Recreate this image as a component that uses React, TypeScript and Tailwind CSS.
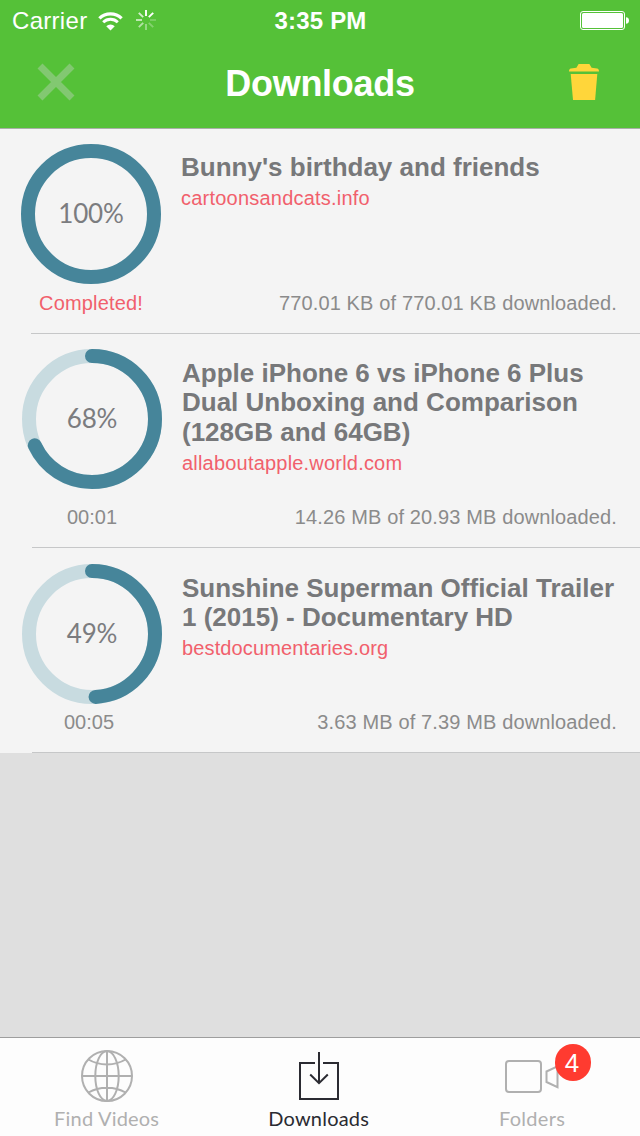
import type { ReactNode } from "react";

const RADIUS = 63;
const CIRCUMFERENCE = 2 * Math.PI * RADIUS;

function ProgressRing({ percent }: { percent: number }) {
  const complete = percent === 100;
  return (
    <div className="grid h-[140px] w-[140px] shrink-0 place-items-center">
      <svg className="col-start-1 row-start-1" width="140" height="140" viewBox="0 0 140 140" fill="none" strokeWidth="14">
        <circle cx="70" cy="70" r={RADIUS} stroke={complete ? "#46859a" : "#c8dbe0"} />
        {!complete && (
          <circle
            cx="70"
            cy="70"
            r={RADIUS}
            stroke="#46859a"
            strokeLinecap="round"
            strokeDasharray={`${(CIRCUMFERENCE * percent) / 100} ${CIRCUMFERENCE}`}
            transform="rotate(-90 70 70)"
          />
        )}
      </svg>
      <span className="col-start-1 row-start-1 pb-0.5 font-['Lato',sans-serif] text-[26px] leading-[32px] tracking-[-0.2px] text-[#7b7c7f]">
        {percent}%
      </span>
    </div>
  );
}

type DownloadProps = {
  title: ReactNode;
  site: string;
  percent: number;
  status: string;
  amount: string;
  frame: string;
  ringSpace: string;
  titleSpace: string;
  siteStyle: string;
  statusStyle: string;
  lineSpace: string;
};

function DownloadRow({ title, site, percent, status, amount, frame, ringSpace, titleSpace, siteStyle, statusStyle, lineSpace }: DownloadProps) {
  return (
    <li className={`flex flex-col bg-[#f4f4f4] ${frame}`}>
      <div className="flex min-h-0 flex-1 pr-[23px] pb-[18px]">
        <div className={`flex w-[140px] shrink-0 flex-col items-center justify-between ${ringSpace}`}>
          <ProgressRing percent={percent} />
          <span className={`shrink-0 text-[20px] leading-[24px] ${statusStyle}`}>{status}</span>
        </div>
        <div className={`flex flex-1 flex-col pl-5 ${titleSpace}`}>
          <h2 className="text-[26px] leading-[29.4px] font-bold whitespace-nowrap text-[#77787a]">{title}</h2>
          <p className={`text-[20px] leading-[24px] text-[#f1606c] ${siteStyle}`}>{site}</p>
          <p className="mt-auto text-right text-[20px] leading-[24px] tracking-[0.13px] whitespace-nowrap text-[#8b8b8b]">
            {amount}
          </p>
        </div>
      </div>
      <div className={`h-px shrink-0 bg-[#c6c7c8] ${lineSpace}`} />
    </li>
  );
}

function StatusBar() {
  return (
    <div className="grid h-10 grid-cols-3 items-center pt-px pr-[11px] pl-3 text-[24px] leading-[40px] text-white">
      <div className="flex items-center">
        <span className="tracking-[0.3px]">Carrier</span>
        <svg className="ml-[11px]" width="25" height="19" viewBox="0 0 26 20" fill="none" stroke="white">
          <path d="M1.3 6.7a16.6 16.6 0 0 1 23.4 0" strokeWidth="3.4" />
          <path d="M5.3 10.8a10.9 10.9 0 0 1 15.4 0" strokeWidth="3" />
          <path d="M8.5 14.9a6.4 6.4 0 0 1 9 0L13 19.5z" fill="white" stroke="none" />
        </svg>
        <svg className="mb-0.5 ml-[13px]" width="20" height="20" viewBox="0 0 20 20" stroke="white" strokeWidth="1.9">
          <path d="M10 0v6" />
          <path d="m17.2 2.8-4.4 4.4" />
          <path d="M20 10h-6" opacity=".22" />
          <path d="m17.2 17.2-4.4-4.4" opacity=".28" />
          <path d="M10 20v-6" opacity=".4" />
          <path d="m2.8 17.2 4.4-4.4" opacity=".55" />
          <path d="M0 10h6" opacity=".65" />
          <path d="m2.8 2.8 4.4 4.4" opacity=".75" />
        </svg>
      </div>
      <span className="text-center font-bold tracking-[0.2px]">3:35 PM</span>
      <svg className="justify-self-end" width="49" height="20" viewBox="0 0 49 20" fill="none">
        <rect x=".5" y=".5" width="44" height="18" rx="2.5" stroke="white" />
        <rect x="2" y="2" width="41" height="15" rx="1.5" fill="white" />
        <path d="M46 6.2c1.7 0 3 1.1 3 3.3s-1.3 3.3-3 3.3z" fill="white" />
      </svg>
    </div>
  );
}

function Header() {
  return (
    <header className="h-[129px] shrink-0 border-b border-[#a9b0a7] bg-[#55c138]">
      <StatusBar />
      <div className="flex h-[88px] items-center justify-between pr-[41px] pl-[37px]">
        <button type="button" aria-label="Cancel" className="-mt-1">
          <svg width="38" height="38" viewBox="0 0 38 38" stroke="#82c871" strokeWidth="7" strokeLinejoin="round">
            <path d="m3 3 32 32M35 3 3 35" />
          </svg>
        </button>
        <h1 className="pr-1 text-[36px] leading-[88px] font-bold tracking-[-0.3px] text-white">Downloads</h1>
        <button type="button" aria-label="Delete" className="-mt-1">
          <svg width="30" height="36" viewBox="0 0 30 36" fill="#ffd63a">
            <path d="M9.6 0h10.8l2.2 3.8 5.5.7c1.3.3 1.9 1.3 1.9 2.9H0c0-1.6.6-2.6 1.9-2.9l5.5-.7z" />
            <path d="M1.7 10h26.6l-2.2 26H4z" />
          </svg>
        </button>
      </div>
    </header>
  );
}

function TabBar() {
  return (
    <nav className="grid h-[99px] shrink-0 grid-cols-3 border-t border-[#9e9e9e] bg-[#fdfdfd] font-['Lato',sans-serif] text-[20px] leading-[24px]">
      <a className="flex flex-col items-center pt-3 text-[#b0b0b0]">
        <svg width="52" height="52" viewBox="0 0 52 52" fill="none" stroke="#b0b0b0" strokeWidth="2">
          <circle cx="26" cy="26" r="25" />
          <ellipse cx="26" cy="26" rx="11.7" ry="25" />
          <path d="M26 1v50M1 26h50M7.5 9.5c10.5 6.5 26.5 6.5 37 0M7.5 42.5c10.5-6.5 26.5-6.5 37 0" />
        </svg>
        <span className="mt-1 tracking-[0.2px]">Find Videos</span>
      </a>
      <a className="flex flex-col items-center pt-3 pr-[2.6px] text-[#2b2b32]">
        <svg width="42" height="52" viewBox="0 0 42 52" fill="none" stroke="#2b2b32" strokeWidth="2">
          <path d="M17 13H2v36h38V13H25M21 2v31M12.2 24.5l8.8 8.7 8.8-8.7" />
        </svg>
        <span className="mt-1 tracking-[0.2px]">Downloads</span>
      </a>
      <a className="relative flex flex-col items-center pt-3 pr-[2.6px] text-[#b0b0b0]">
        <svg width="54" height="52" viewBox="0 0 54 52" fill="none" stroke="#b0b0b0" strokeWidth="2">
          <rect x="1" y="11" width="35" height="31" rx="3" />
          <path d="M52.5 16.3 41.5 21.5V32l11 5.2z" />
        </svg>
        <span className="mt-1 tracking-[0.3px]">Folders</span>
        <span className="absolute top-1.5 right-[49px] grid h-[37px] w-9 place-items-center rounded-full bg-[#ff3b30] pr-0.5 font-['Liberation_Sans',Arial,sans-serif] text-[26px] leading-[36px] text-white">
          4
        </span>
      </a>
    </nav>
  );
}

export default function App() {
  return (
    <div className="flex h-[1136px] w-[640px] flex-col overflow-hidden bg-[#dfdfdf] font-['Liberation_Sans',Arial,sans-serif]">
      <Header />
      <main className="flex-1">
        <ul>
          <DownloadRow
            title="Bunny's birthday and friends"
            site="cartoonsandcats.info"
            percent={100}
            status="Completed!"
            amount="770.01 KB of 770.01 KB downloaded."
            frame="h-[205px]"
            ringSpace="ml-[21px] pt-[15px]"
            titleSpace="pt-[24px]"
            siteStyle="mt-1 tracking-[0.22px]"
            statusStyle="tracking-[0.15px] text-[#f1606c]"
            lineSpace="ml-[31px]"
          />
          <DownloadRow
            title={<>Apple iPhone 6 vs iPhone 6 Plus<br />Dual Unboxing and Comparison<br />(128GB and 64GB)</>}
            site="allaboutapple.world.com"
            percent={68}
            status="00:01"
            amount="14.26 MB of 20.93 MB downloaded."
            frame="h-[214px]"
            ringSpace="ml-[22px] pt-[15px]"
            titleSpace="pt-[25px]"
            siteStyle="mt-1 tracking-[0.2px]"
            statusStyle="text-[#8b8b8b]"
            lineSpace="ml-8"
          />
          <DownloadRow
            title={<>Sunshine Superman Official Trailer<br />1 (2015) - Documentary HD</>}
            site="bestdocumentaries.org"
            percent={49}
            status="00:05"
            amount="3.63 MB of 7.39 MB downloaded."
            frame="h-[205px]"
            ringSpace="ml-[22px] pt-[16px]"
            titleSpace="pt-[26px]"
            siteStyle="mt-[3px] tracking-[0.13px]"
            statusStyle="pr-[6px] text-[#8b8b8b]"
            lineSpace="ml-8"
          />
        </ul>
      </main>
      <TabBar />
    </div>
  );
}
